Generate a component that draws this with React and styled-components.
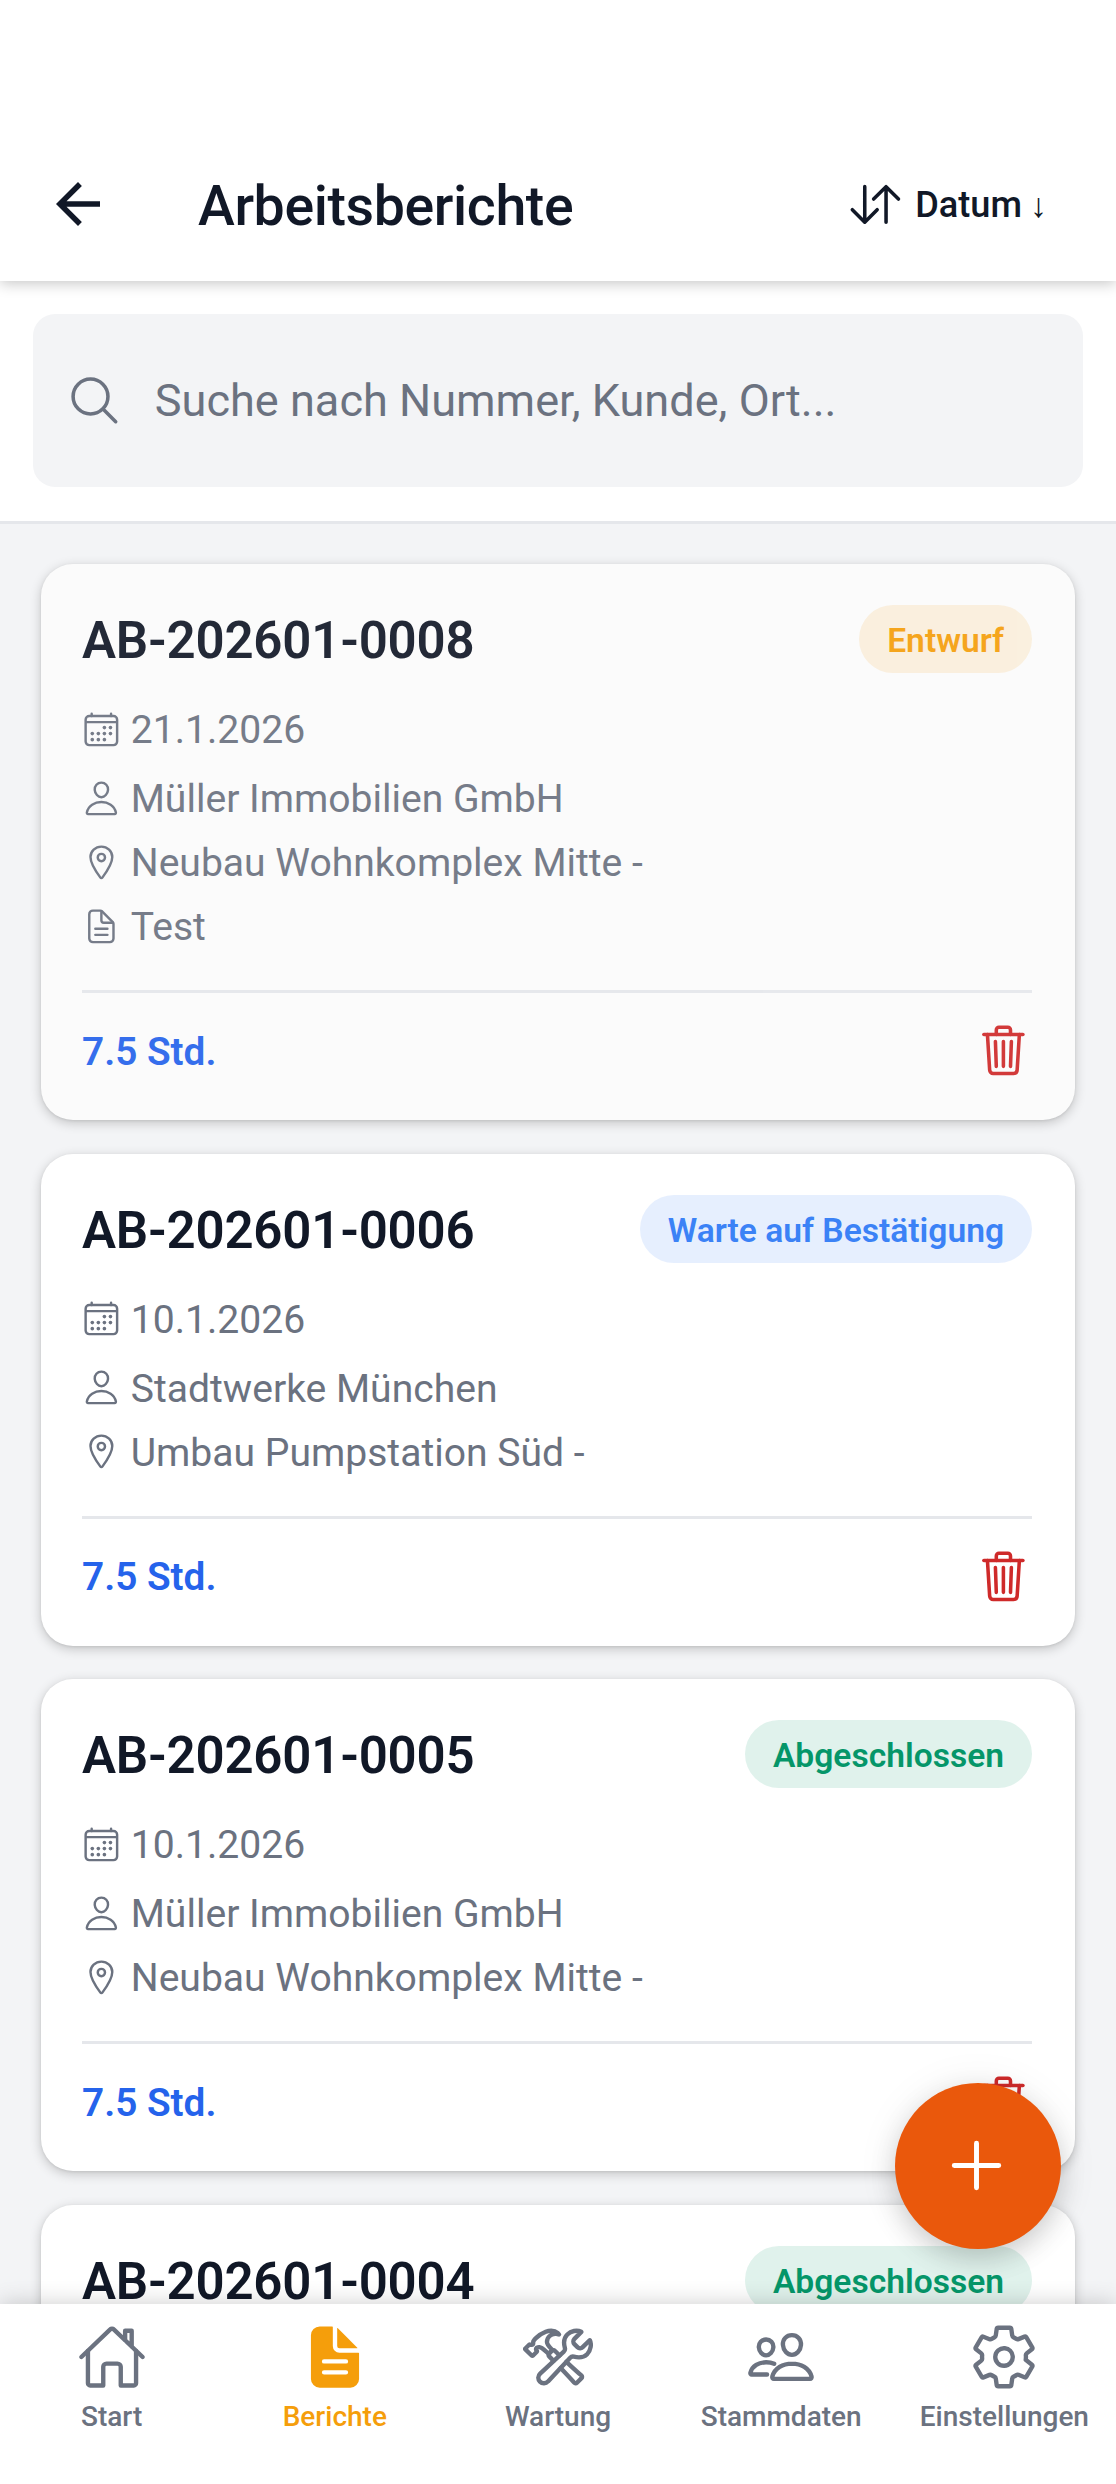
import React from "react";
import styled, { createGlobalStyle } from "styled-components";
import {
    IoAdd,
    IoCalendarOutline,
    IoConstructOutline,
    IoDocumentText,
    IoDocumentTextOutline,
    IoHomeOutline,
    IoLocationOutline,
    IoPeopleOutline,
    IoPersonOutline,
    IoSearchOutline,
    IoSettingsOutline,
    IoSwapVerticalOutline,
    IoTrashOutline,
} from "react-icons/io5";

const GlobalStyle = createGlobalStyle`
    * {
        box-sizing: border-box;
    }
    body {
        margin: 0;
        font-family: Roboto, "Noto Sans", sans-serif;
        color: #111827;
        background: #f3f4f6;
    }
    button {
        padding: 0;
        border: none;
        background: none;
        font-family: inherit;
        color: inherit;
        cursor: pointer;
    }
    svg {
        display: block;
        flex-shrink: 0;
    }
`;

const Screen = styled.div`
    width: 100%;
    height: 2484px;
    display: flex;
    flex-direction: column;
    overflow: hidden;
    position: relative;
`;

const Header = styled.header`
    height: 281px;
    flex-shrink: 0;
    padding: 127px 69px 0 45px;
    display: flex;
    align-items: center;
    background: #fff;
    box-shadow: 0 2px 14px rgba(0, 0, 0, 0.24);
    position: relative;
    z-index: 2;
`;

const Title = styled.h1`
    margin: 6px 0 0 87px;
    flex: 1;
    font-size: 55.5px;
    line-height: 66px;
    font-weight: 500;
    letter-spacing: -0.4px;
`;

const SortButton = styled.button`
    display: flex;
    align-items: center;
    gap: 11px;
    font-size: 36.2px;
    line-height: 44px;
    font-weight: 500;
`;

const SortLabel = styled.span`
    margin-top: 2px;
`;

const SortArrow = styled.span`
    margin-left: 8px;
    font-size: 34px;
    font-weight: 300;
`;

const SearchSection = styled.div`
    height: 243px;
    flex-shrink: 0;
    padding: 33px;
    background: #fff;
    border-bottom: 3px solid #e5e7eb;
`;

const SearchBox = styled.label`
    height: 173px;
    padding: 0 33px;
    display: flex;
    align-items: center;
    gap: 32px;
    border-radius: 22px;
    background: #f3f4f6;
    color: #6b7280;
`;

const SearchInput = styled.input`
    flex: 1;
    padding: 0;
    border: none;
    outline: none;
    background: transparent;
    font-family: inherit;
    font-size: 45.1px;
    line-height: 60px;
    &::placeholder {
        color: #6b7280;
        opacity: 1;
    }
`;

const List = styled.main`
    flex: 1;
    min-height: 0;
    padding: 40px 41px 0;
    display: flex;
    flex-direction: column;
    gap: 33.5px;
    overflow: hidden;
`;

const Card = styled.article`
    flex-shrink: 0;
    min-height: 492px;
    padding: 41px 43px 41px 41px;
    border-radius: 32px;
    background: ${({ $draft }) => ($draft ? "#fbfbfb" : "#fff")};
    box-shadow: 0 3px 12px rgba(0, 0, 0, 0.2), 0 1px 3px rgba(0, 0, 0, 0.08);
    > * {
        opacity: ${({ $draft }) => ($draft ? 0.92 : 1)};
    }
`;

const CardTop = styled.div`
    height: 68px;
    display: flex;
    align-items: center;
    justify-content: space-between;
`;

const Number = styled.h2`
    margin: 4px 0 0;
    font-size: 51px;
    line-height: 60px;
    font-weight: 600;
    letter-spacing: -0.2px;
`;

const Badge = styled.span`
    height: 68px;
    padding: 0 28px;
    border-radius: 34px;
    font-size: 33.6px;
    line-height: 71px;
    font-weight: 600;
    color: ${({ $color }) => $color};
    background: ${({ $color }) => $color}20;
`;

const InfoRow = styled.div`
    height: 64px;
    display: flex;
    align-items: center;
    gap: 10px;
    color: #6b7280;
    font-size: 39.1px;
    line-height: 46px;
    &:first-of-type {
        margin-bottom: 5px;
    }
`;

const InfoText = styled.span`
    margin-top: 2px;
`;

const Details = styled.div`
    margin-top: 24px;
    padding-bottom: 32px;
    border-bottom: 3px solid #e5e7eb;
`;

const CardBottom = styled.div`
    height: 57px;
    margin-top: 29px;
    display: flex;
    align-items: center;
    justify-content: space-between;
`;

const Hours = styled.span`
    margin-top: 1px;
    font-size: 38.75px;
    font-weight: 600;
    color: #2563eb;
`;

const DeleteButton = styled.button`
    color: #cf2a2a;
`;

const Fab = styled.button`
    position: absolute;
    right: 55px;
    bottom: 235px;
    width: 166px;
    height: 166px;
    padding: 0 3px 1px 0;
    display: flex;
    align-items: center;
    justify-content: center;
    border-radius: 50%;
    background: #ea580c;
    color: #fff;
    box-shadow: 0 10px 26px rgba(0, 0, 0, 0.16), 0 2px 44px rgba(0, 0, 0, 0.07);
    z-index: 2;
`;

const TabBar = styled.nav`
    height: 180px;
    flex-shrink: 0;
    padding-top: 18px;
    display: grid;
    grid-template-columns: repeat(5, 1fr);
    background: #fff;
    box-shadow: 0 0 22px rgba(0, 0, 0, 0.2);
    position: relative;
    z-index: 1;
`;

const Tab = styled.button`
    display: flex;
    flex-direction: column;
    align-items: center;
    gap: 8px;
    font-size: 28px;
    line-height: 34px;
    font-weight: 500;
    color: ${({ $active }) => ($active ? "#f59e0b" : "#6b7280")};
`;

const reports = [
    {
        number: "AB-202601-0008",
        status: "Entwurf",
        date: "21.1.2026",
        customer: "Müller Immobilien GmbH",
        place: "Neubau Wohnkomplex Mitte -",
        note: "Test",
        hours: 7.5,
    },
    {
        number: "AB-202601-0006",
        status: "Warte auf Bestätigung",
        date: "10.1.2026",
        customer: "Stadtwerke München",
        place: "Umbau Pumpstation Süd -",
        hours: 7.5,
    },
    {
        number: "AB-202601-0005",
        status: "Abgeschlossen",
        date: "10.1.2026",
        customer: "Müller Immobilien GmbH",
        place: "Neubau Wohnkomplex Mitte -",
        hours: 7.5,
    },
    {
        number: "AB-202601-0004",
        status: "Abgeschlossen",
    },
];

const statusColors = {
    Entwurf: "#f59e0b",
    "Warte auf Bestätigung": "#3b82f6",
    Abgeschlossen: "#059669",
};

const tabs = [
    { label: "Start", Icon: IoHomeOutline },
    { label: "Berichte", Icon: IoDocumentText, active: true },
    { label: "Wartung", Icon: IoConstructOutline },
    { label: "Stammdaten", Icon: IoPeopleOutline },
    { label: "Einstellungen", Icon: IoSettingsOutline },
];

function BackArrow() {
    return (
        <svg width="66" height="66" viewBox="0 0 24 24" fill="currentColor">
            <path d="M20 11H7.83l5.59-5.59L12 4l-8 8 8 8 1.41-1.41L7.83 13H20v-2z" />
        </svg>
    );
}

function Info({ icon: Icon, children }) {
    return (
        <InfoRow>
            <Icon size={38.75} />
            <InfoText>{children}</InfoText>
        </InfoRow>
    );
}

function ReportCard({ report }) {
    return (
        <Card $draft={report.status === "Entwurf"}>
            <CardTop>
                <Number>{report.number}</Number>
                <Badge $color={statusColors[report.status]}>{report.status}</Badge>
            </CardTop>
            {report.date && (
                <Details>
                    <Info icon={IoCalendarOutline}>{report.date}</Info>
                    <Info icon={IoPersonOutline}>{report.customer}</Info>
                    <Info icon={IoLocationOutline}>{report.place}</Info>
                    {report.note && <Info icon={IoDocumentTextOutline}>{report.note}</Info>}
                </Details>
            )}
            {report.hours && (
                <CardBottom>
                    <Hours>{`${report.hours} Std.`}</Hours>
                    <DeleteButton aria-label="Löschen">
                        <IoTrashOutline size={56.8} />
                    </DeleteButton>
                </CardBottom>
            )}
        </Card>
    );
}

function App() {
    return (
        <>
            <GlobalStyle />
            <Screen>
                <Header>
                    <button aria-label="Zurück">
                        <BackArrow />
                    </button>
                    <Title>Arbeitsberichte</Title>
                    <SortButton>
                        <IoSwapVerticalOutline size={56.8} />
                        <SortLabel>
                            Datum
                            <SortArrow>↓</SortArrow>
                        </SortLabel>
                    </SortButton>
                </Header>
                <SearchSection>
                    <SearchBox>
                        <IoSearchOutline size={56.8} />
                        <SearchInput placeholder="Suche nach Nummer, Kunde, Ort..." />
                    </SearchBox>
                </SearchSection>
                <List>
                    {reports.map((report) => (
                        <ReportCard key={report.number} report={report} />
                    ))}
                </List>
                <TabBar>
                    {tabs.map(({ label, Icon, active }) => (
                        <Tab key={label} $active={active}>
                            <Icon size={70} />
                            {label}
                        </Tab>
                    ))}
                </TabBar>
                <Fab aria-label="Neuer Bericht">
                    <IoAdd size={79} />
                </Fab>
            </Screen>
        </>
    );
}

export default App;
